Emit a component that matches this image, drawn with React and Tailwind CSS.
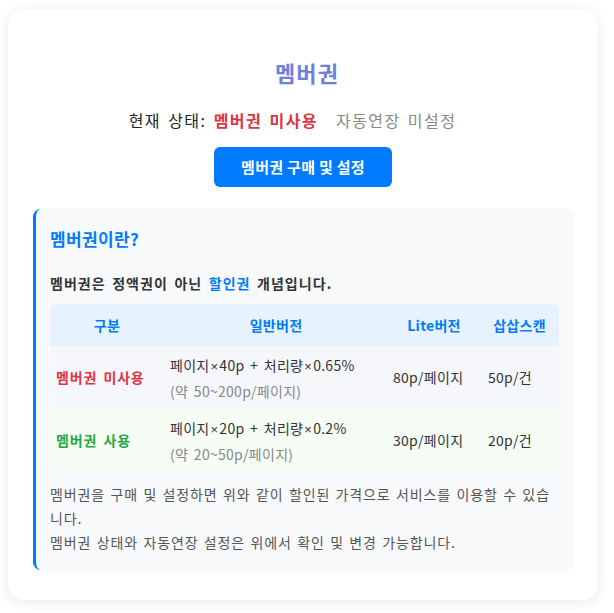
import React from 'react';

const rows = [
  {
    label: '멤버권 미사용',
    labelClass: 'text-[#dc3545]',
    rowClass: 'bg-[#f6f7fb]',
    normal: ['페이지', '40p + 처리량', '0.65%'],
    range: '(약 50~200p/페이지)',
    lite: '80p/페이지',
    scan: '50p/건',
  },
  {
    label: '멤버권 사용',
    labelClass: 'text-[#28a745]',
    rowClass: 'bg-[#f5fdf4]',
    normal: ['페이지', '20p + 처리량', '0.2%'],
    range: '(약 20~50p/페이지)',
    lite: '30p/페이지',
    scan: '20p/건',
  },
];

function Times() {
  return <span className="px-[1px] font-['Liberation_Sans'] text-[13px]">×</span>;
}

export default function App() {
  return (
    <div
      className="min-h-[613px] bg-white px-2 pt-2.5 pb-3 tracking-[0.055em] [word-spacing:0.14em]"
      style={{ fontFamily: '"Noto Sans CJK KR", "Noto Sans", sans-serif' }}
    >
      <div className="w-[590px] rounded-2xl bg-white shadow-[0_2px_14px_rgba(0,0,0,0.09)] px-[25px] pt-[44px] pb-[30px]">
        {/* Header */}
        <h2 className="pl-[8px] text-center text-[22px] font-bold leading-[36px] tracking-[0.05em] text-[#6f7fdc]">멤버권</h2>
        <p className="mt-[18px] pr-[21px] text-center text-[16px] leading-[24px] tracking-[0.09em] text-[#222]">
          현재 상태: <span className="font-bold text-[#dc3545]">멤버권 미사용</span>
          <span className="ml-[18px] text-[#888]">자동연장 미설정</span>
        </p>
        <div className="mt-[15px] flex justify-center">
          <button className="h-10 w-[178px] rounded-md bg-[#007bff] text-[15px] font-bold tracking-[0.02em] text-white">
            멤버권 구매 및 설정
          </button>
        </div>

        {/* Info box */}
        <div className="mt-[22px] rounded-lg border-l-[3px] border-[#007bff] bg-[#f8f9fb] pl-[14px] pr-[14px] pt-[18px] pb-[16px] shadow-[0_1px_4px_rgba(0,0,0,0.04)]">
          <h3 className="text-[17px] font-bold leading-[24px] tracking-[0.02em] text-[#007bff]">멤버권이란?</h3>
          <p className="mt-[21px] text-[14px] font-bold leading-[22px] tracking-[0.075em] text-[#333]">
            멤버권은 정액권이 아닌 <span className="text-[#007bff]">할인권</span> 개념입니다.
          </p>

          <div className="mt-[10px] overflow-hidden rounded-md">
            <div className="grid grid-cols-[114px_224px_92px_79px] bg-[#e6f2fd] h-[42px] items-center text-center text-[14px] font-bold tracking-[0.02em] text-[#007bff]">
              <div>구분</div>
              <div>일반버전</div>
              <div>Lite버전</div>
              <div>삽삽스캔</div>
            </div>
            {rows.map((r) => (
              <div
                key={r.label}
                className={`grid grid-cols-[114px_224px_92px_79px] h-[63px] items-center text-[14px] text-[#333] tracking-[0.02em] ${r.rowClass}`}
              >
                <div className={`pl-[6px] font-bold tracking-[0.06em] ${r.labelClass}`}>{r.label}</div>
                <div className="pl-[6px] leading-[24px]">
                  <div>
                    {r.normal[0]}
                    <Times />
                    {r.normal[1]}
                    <Times />
                    {r.normal[2]}
                  </div>
                  <div className="text-[#888]">{r.range}</div>
                </div>
                <div className="pl-[5px]">{r.lite}</div>
                <div className="pl-[8px]">{r.scan}</div>
              </div>
            ))}
          </div>

          <p className="mt-[10px] text-[14px] leading-[24px] text-[#555] [word-spacing:0.1em]">
            멤버권을 구매 및 설정하면 위와 같이 할인된 가격으로 서비스를 이용할 수 있습니다.
            <br />
            멤버권 상태와 자동연장 설정은 위에서 확인 및 변경 가능합니다.
          </p>
        </div>
      </div>
    </div>
  );
}
